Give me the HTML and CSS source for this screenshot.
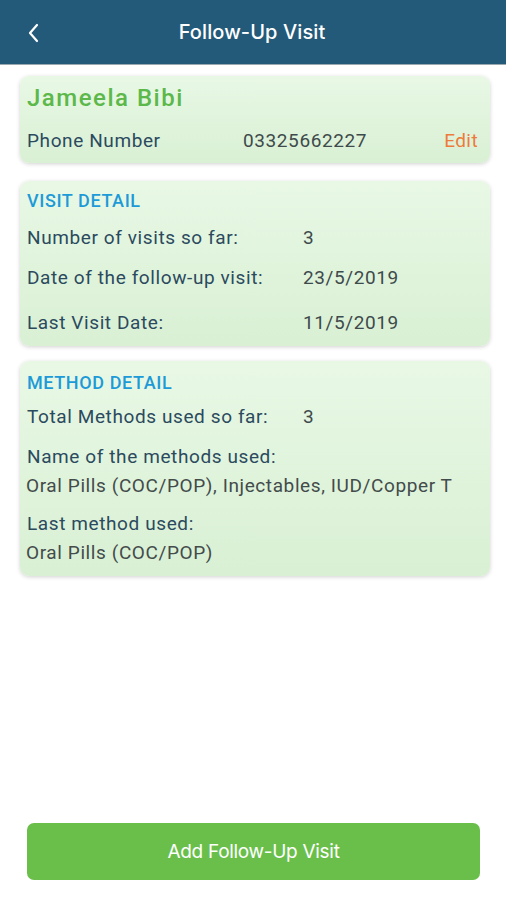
FILE: index.html
```html
<!DOCTYPE html>
<html>
<head>
<meta charset="utf-8">
<link rel="stylesheet" href="styles.css">
</head>
<body>
<div class="app">
  <header class="topbar">
    <span class="back"><svg width="14" height="22" viewBox="0 0 14 22"><path d="M11 3 L4 11 L11 19" fill="none" stroke="#fff" stroke-width="2.2" stroke-linecap="round" stroke-linejoin="round"/></svg></span>
    <h1 class="title">Follow-Up Visit</h1>
  </header>
  <main class="content">
    <section class="card card-person">
      <div class="name">Jameela Bibi</div>
      <div class="phone-row">
        <span class="label phone-label">Phone Number</span>
        <span class="value phone-value">03325662227</span>
        <span class="edit">Edit</span>
      </div>
    </section>
    <section class="card card-visit">
      <div class="section-title">VISIT DETAIL</div>
      <div class="row row-1"><span class="label col">Number of visits so far:</span><span class="value">3</span></div>
      <div class="row row-2"><span class="label col">Date of the follow-up visit:</span><span class="value">23/5/2019</span></div>
      <div class="row row-3"><span class="label col">Last Visit Date:</span><span class="value">11/5/2019</span></div>
    </section>
    <section class="card card-method">
      <div class="section-title">METHOD DETAIL</div>
      <div class="row row-m1"><span class="label col">Total Methods used so far:</span><span class="value">3</span></div>
      <div class="stack stack-1">
        <div class="label">Name of the methods used:</div>
        <div class="sub">Oral Pills (COC/POP), Injectables, IUD/Copper T</div>
      </div>
      <div class="stack stack-2">
        <div class="label">Last method used:</div>
        <div class="sub">Oral Pills (COC/POP)</div>
      </div>
    </section>
  </main>
  <div class="footer">
    <button class="add-btn">Add Follow-Up Visit</button>
  </div>
</div>
</body>
</html>
```
FILE: styles.css
```css
* { box-sizing: border-box; }
html, body { margin: 0; padding: 0; background: #ffffff; }
body { font-family: Roboto, "Noto Sans", "Liberation Sans", sans-serif; }
.app { width: 506px; height: 900px; display: flex; flex-direction: column; }
.topbar {
  height: 65px; background: #235a7a; display: flex; align-items: center;
  justify-content: center; position: relative; border-bottom: 1px solid #9aa8b0;
}
.back { position: absolute; left: 26px; top: 22px; display: flex; }
.title {
  margin: 0; color: #ffffff; font-family: Inter, Roboto, sans-serif; font-weight: 500;
  font-size: 20px; letter-spacing: 0.1px; margin-left: -2px;
}
.content { flex: 1; padding: 11px 16px 0 20px; display: flex; flex-direction: column; }
.card {
  width: 470px; border-radius: 9px;
  background: linear-gradient(180deg, #e8f8e5 0%, #d9f0d4 100%);
  box-shadow: 0 1px 4px rgba(0,0,0,0.18);
  padding: 0 12px 0 7px;
}
.label { color: #2b4a5e; font-size: 19px; letter-spacing: 0.6px; font-weight: 400; }
.value { color: #3e4a4c; font-size: 19px; letter-spacing: 0.6px; }
.card-person { height: 87px; padding-top: 8px; }
.name { color: #5cb84a; font-size: 24px; font-weight: 500; letter-spacing: 1.5px; line-height: 28px; }
.phone-row { display: flex; align-items: center; margin-top: 18px; line-height: 22px; }
.phone-label { width: 216px; }
.phone-value { flex: 1; }
.edit { color: #ee7a3c; font-size: 19px; letter-spacing: 0.4px; }
.card-visit { height: 165px; padding-top: 10px; margin-top: 18px; }
.section-title { color: #1d9ad8; font-size: 18px; font-weight: 500; line-height: 20px; letter-spacing: 0.6px; }
.row { display: flex; line-height: 22px; }
.col { width: 276px; }
.row-1 { margin-top: 16px; }
.row-2 { margin-top: 18px; }
.row-3 { margin-top: 23px; }
.card-method { height: 215px; padding-top: 12px; margin-top: 15px; }
.row-m1 { margin-top: 13px; }
.stack { line-height: 22px; }
.stack-1 { margin-top: 18px; }
.stack-2 { margin-top: 16px; }
.sub { color: #434b4b; font-size: 19px; letter-spacing: 0.6px; margin-left: -1px; margin-top: 7px; }
.footer { padding: 0 26px 20px 27px; }
.add-btn {
  width: 453px; height: 57px; border: none; border-radius: 7px; background: #6abf4b;
  color: #ffffff; font-family: Inter, Roboto, sans-serif; font-size: 19px; font-weight: 400;
  letter-spacing: -0.3px;
}
```
